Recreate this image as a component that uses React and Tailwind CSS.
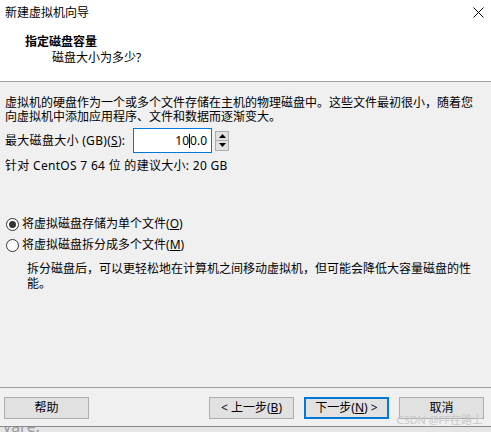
import { useState } from 'react';

const font = "font-['Noto_Sans','Noto_Sans_CJK_SC',sans-serif]";

function Radio({ checked, label, hotkey, onClick }) {
  return (
    <div className="flex items-center h-[16px] cursor-default" onClick={onClick}>
      <span className="ml-[6px] w-[13px] h-[13px] rounded-full border border-[#333333] bg-white flex items-center justify-center">
        {checked && <span className="w-[7px] h-[7px] rounded-full bg-[#333333]" />}
      </span>
      <span className="ml-[3px] text-[12px] leading-[16px]">
        {label}(<span className="underline">{hotkey}</span>)
      </span>
    </div>
  );
}

function Btn({ children, primary, className }) {
  return (
    <button
      className={
        'h-[22px] w-[85px] bg-[#e1e1e1] text-[12px] leading-[16px] text-black flex items-center justify-center ' +
        (primary ? 'border-2 border-[#0078d7] ' : 'border border-[#adadad] ') +
        (className || '')
      }
    >
      {children}
    </button>
  );
}

export default function App() {
  const [single, setSingle] = useState(true);

  return (
    <div className={`w-[491px] h-[432px] overflow-hidden bg-[#f0f0f0] text-black relative ${font}`}>
      {/* cabecera */}
      <div className="h-[82px] bg-white border-b border-[#a0a0a0] flex flex-col">
        <div className="h-[25px] flex items-center justify-between px-[5px]">
          <span className="text-[12px] leading-[16px]">新建虚拟机向导</span>
          <svg width="11" height="11" viewBox="0 0 11 11" className="mr-[2px]">
            <path d="M0.5 0.5 L10.5 10.5 M10.5 0.5 L0.5 10.5" stroke="#000" strokeWidth="1" />
          </svg>
        </div>
        <div className="mt-[9px] pl-[25px] text-[12px] leading-[16px] font-bold">指定磁盘容量</div>
        <div className="pl-[52px] text-[12px] leading-[16px]">磁盘大小为多少?</div>
      </div>

      <div className="h-[344px] flex flex-col">
        <p className="mt-[14px] px-[5px] text-[12px] leading-[14px] whitespace-nowrap">
          虚拟机的硬盘作为一个或多个文件存储在主机的物理磁盘中。这些文件最初很小，随着您
          <br />
          向虚拟机中添加应用程序、文件和数据而逐渐变大。
        </p>

        <div className="mt-[4px] flex items-center h-[25px] pl-[5px]">
          <span className="text-[12px] leading-[16px] w-[128px] tracking-[0.3px]">
            最大磁盘大小 (GB)(<span className="underline">S</span>):
          </span>
          <div className="w-[79px] h-[25px] bg-white border border-[#0078d7] flex items-center justify-end pr-[4px] text-[12px]">
            10<span className="inline-block w-[1px] h-[14px] bg-black" />0.0
          </div>
          <div className="ml-[3px] w-[14px] h-[20px] border border-[#adadad] bg-[#e1e1e1] flex flex-col">
            <div className="flex-1 flex items-center justify-center border-b border-[#adadad]">
              <svg width="7" height="4" viewBox="0 0 7 4"><path d="M0 4 L3.5 0 L7 4 Z" fill="#000" /></svg>
            </div>
            <div className="flex-1 flex items-center justify-center">
              <svg width="7" height="4" viewBox="0 0 7 4"><path d="M0 0 L3.5 4 L7 0 Z" fill="#000" /></svg>
            </div>
          </div>
        </div>

        <div className="mt-[6px] px-[5px] text-[12px] leading-[14px] tracking-[0.3px]">针对 CentOS 7 64 位 的建议大小: 20 GB</div>

        <div className="mt-[43px]">
          <Radio checked={single} label="将虚拟磁盘存储为单个文件" hotkey="O" onClick={() => setSingle(true)} />
        </div>
        <div className="mt-[5px]">
          <Radio checked={!single} label="将虚拟磁盘拆分成多个文件" hotkey="M" onClick={() => setSingle(false)} />
        </div>
        <p className="mt-[8px] pl-[27px] text-[12px] leading-[15px] whitespace-nowrap">
          拆分磁盘后，可以更轻松地在计算机之间移动虚拟机，但可能会降低大容量磁盘的性
          <br />
          能。
        </p>

        <div className="flex-1" />
        <div className="border-t border-[#a0a0a0] pt-[9px] pb-[7px] pl-[4px] pr-[7px] flex items-center">
          <Btn>帮助</Btn>
          <div className="flex-1" />
          <Btn>
            &lt; 上一步(<span className="underline">B</span>)
          </Btn>
          <Btn primary className="ml-[10px]">
            下一步(<span className="underline">N</span>) &gt;
          </Btn>
          <Btn className="ml-[10px]">取消</Btn>
        </div>
      </div>

      {/* borde inferior de la ventana */}
      <div className="h-[6px] border-t border-[#8a8a8a] bg-[#e6e6e6] overflow-hidden">
        <div className="pl-[3px] text-[16px] leading-[16px] text-[#9a9a9a] -mt-[9px]">vare.</div>
      </div>

      <div className="absolute right-[8px] top-[413px] text-[11px] leading-[14px] text-[#c8c8c8]">CSDN @FF在路上</div>
    </div>
  );
}
